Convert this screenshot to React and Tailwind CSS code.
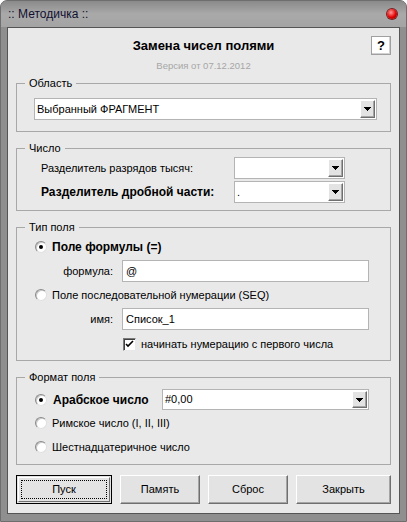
import React from "react";

const F = { fontFamily: '"Liberation Sans", Arial, sans-serif' };

function Arrow() {
  return (
    <svg width="7" height="4" viewBox="0 0 7 4" className="block">
      <path d="M0 0h7v1H0zM1 1h5v1H1zM2 2h3v1H2zM3 3h1v1H3z" fill="#000" />
    </svg>
  );
}

function Combo({ value, className = "", h = "h-[22px]" }) {
  return (
    <div className={`flex ${h} items-stretch border border-[#b4b4b4] bg-white ${className}`}>
      <div className="flex flex-1 items-center pl-[2px] text-[11px] text-black">{value}</div>
      <div className="m-px flex w-[15px] items-center justify-center border-t border-l border-t-white border-l-white border-r border-b border-r-[#6f6f6f] border-b-[#6f6f6f] bg-[#e3e3e3] shadow-[inset_-1px_-1px_0_#a5a5a5]">
        <Arrow />
      </div>
    </div>
  );
}

function Input({ value, className = "" }) {
  return (
    <div className={`flex h-[22px] items-center border border-[#b4b4b4] bg-white pl-[3px] text-[11px] text-black ${className}`}>
      {value}
    </div>
  );
}

function Radio({ checked }) {
  return (
    <div className="flex h-[12px] w-[12px] shrink-0 items-center justify-center rounded-full border border-[#8a8a8a] border-b-[#e0e0e0] border-r-[#e0e0e0] bg-white shadow-[inset_1px_1px_0_#c8c8c8]">
      {checked && <div className="h-[4px] w-[4px] rounded-full bg-black" />}
    </div>
  );
}

function Group({ title, className = "", children }) {
  return (
    <fieldset className={`mx-0 border border-[#a8a8a8] px-0 ${className}`}>
      <legend className="ml-[8px] px-[4px] text-[11px] leading-[14px] text-black">{title}</legend>
      {children}
    </fieldset>
  );
}

function Btn({ children, def, className = "" }) {
  if (def) {
    return (
      <div className={`flex h-[29px] items-center justify-center border border-black bg-[#e3e3e3] p-px ${className}`}>
        <div className="flex h-full w-full items-center justify-center border-t border-l border-t-white border-l-white border-r border-b border-r-[#6f6f6f] border-b-[#6f6f6f] p-[2px]">
          <div className="flex h-full w-full items-center justify-center border border-dotted border-black text-[11px]">
            {children}
          </div>
        </div>
      </div>
    );
  }
  return (
    <div className={`flex h-[29px] items-center justify-center border-t border-l border-t-white border-l-white border-r border-b border-r-[#6f6f6f] border-b-[#6f6f6f] bg-[#e3e3e3] text-[11px] shadow-[inset_-1px_-1px_0_#a5a5a5] ${className}`}>
      {children}
    </div>
  );
}

export default function App() {
  return (
    <div style={F} className="h-[522px] w-[407px] overflow-hidden rounded-t-[7px] border border-[#6e6e6e] bg-[#8f8f8f] text-black">
      <div className="flex h-[26px] items-center justify-between bg-gradient-to-b from-[#8a8a8a] via-[#a9a9a9] to-[#a4a4a4] pl-[7px] pr-[9px]">
        <span className="text-[12px] text-[#101030]">:: Методичка ::</span>
        <div className="h-[10px] w-[10px] rounded-full bg-[radial-gradient(circle_at_40%_35%,#ff9a9a,#e00000_55%,#8a0000)] shadow-[0_0_0_1px_#7a2020]" />
      </div>
      <div className="mx-[6px] h-[487px] border border-[#555] bg-[#e9e9e9] px-[8px]">
        <div className="grid grid-cols-[1fr_auto_1fr] items-center pt-[8px]">
          <div />
          <div className="text-[13px] font-bold leading-[19px]">Замена чисел полями</div>
          <div className="flex justify-end">
            <div className="flex h-[19px] w-[20px] items-center justify-center border border-[#a0a0a0] bg-white text-[13px] font-bold shadow-[inset_-1px_-1px_0_#d0d0d0]">?</div>
          </div>
        </div>
        <div className="mt-[5px] text-center text-[9.5px] leading-[12px] text-[#a6a6a6]">Версия от 07.12.2012</div>

        <Group title="Область" className="mt-[4px]">
          <div className="pb-[11px] pl-[17px] pr-[13px] pt-[8px]">
            <Combo value="Выбранный ФРАГМЕНТ" />
          </div>
        </Group>

        <Group title="Число" className="mt-[9px]">
          <div className="grid grid-cols-[193px_111px] gap-y-[2px] pb-[7px] pl-[24px] pt-[2px] text-[11px]">
            <div className="flex items-center">Разделитель разрядов тысяч:</div>
            <Combo value="" />
            <div className="flex items-center text-[12px] font-bold">Разделитель дробной части:</div>
            <Combo value="." />
          </div>
        </Group>

        <Group title="Тип поля" className="mt-[9px]">
          <div className="pb-[8px] pl-[18px] pt-[5px] text-[11px]">
            <div className="flex h-[16px] items-center gap-[5px]">
              <Radio checked />
              <span className="text-[12px] font-bold">Поле формулы (=)</span>
            </div>
            <div className="mt-[5px] flex items-center">
              <div className="w-[78px] text-right">формула:</div>
              <Input value="@" className="ml-[9px] w-[247px]" />
            </div>
            <div className="mt-[5px] flex h-[16px] items-center gap-[5px]">
              <Radio />
              <span>Поле последовательной нумерации (SEQ)</span>
            </div>
            <div className="mt-[5px] flex items-center">
              <div className="w-[78px] text-right">имя:</div>
              <Input value="Список_1" className="ml-[9px] w-[247px]" />
            </div>
            <div className="mt-[6px] flex h-[16px] items-center gap-[5px] pl-[88px]">
              <div className="flex h-[13px] w-[13px] items-center justify-center border border-[#7a7a7a] border-b-[#e8e8e8] border-r-[#e8e8e8] bg-white shadow-[inset_1px_1px_0_#404040]">
                <svg width="9" height="9" viewBox="0 0 9 9">
                  <path d="M1 4l2 2 5-5" stroke="#000" strokeWidth="1.6" fill="none" />
                </svg>
              </div>
              <span>начинать нумерацию с первого числа</span>
            </div>
          </div>
        </Group>

        <Group title="Формат поля" className="mt-[9px]">
          <div className="pb-[9px] pl-[18px] pt-[5px] text-[11px]">
            <div className="flex items-center">
              <div className="flex w-[127px] items-center gap-[6px]">
                <Radio checked />
                <span className="text-[12px] font-bold">Арабское число</span>
              </div>
              <Combo value="#0,00" h="h-[21px]" className="w-[207px]" />
            </div>
            <div className="mt-[5px] flex h-[16px] items-center gap-[5px]">
              <Radio />
              <span>Римское число (I, II, III)</span>
            </div>
            <div className="mt-[8px] flex h-[16px] items-center gap-[5px]">
              <Radio />
              <span>Шестнадцатеричное число</span>
            </div>
          </div>
        </Group>

        <div className="mt-[10px] flex gap-[8px]">
          <Btn def className="w-[96px]">Пуск</Btn>
          <Btn className="w-[80px]">Память</Btn>
          <Btn className="w-[80px]">Сброс</Btn>
          <Btn className="w-[95px]">Закрыть</Btn>
        </div>
      </div>
    </div>
  );
}
